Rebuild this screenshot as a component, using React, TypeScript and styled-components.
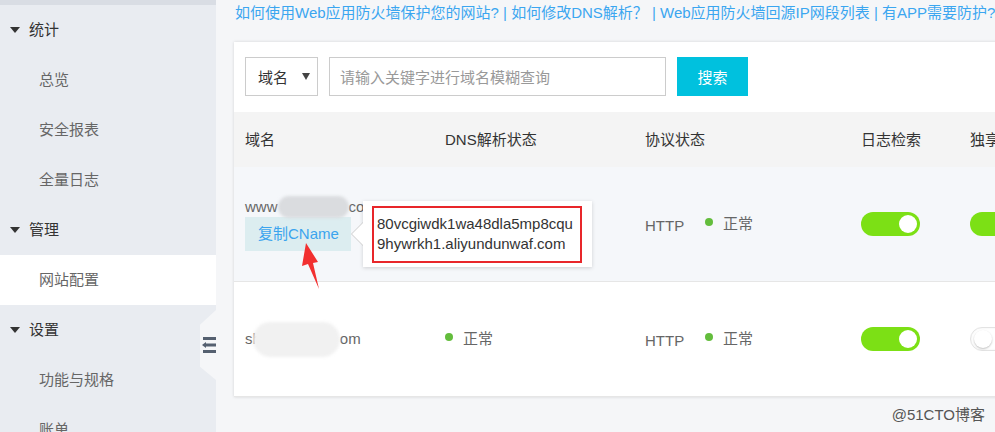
import React from 'react';
import styled, { createGlobalStyle } from 'styled-components';

const GlobalStyle = createGlobalStyle`
  html, body {
    margin: 0;
    padding: 0;
    background: #f5f6f8;
  }
  body {
    font-family: "Liberation Sans", "Noto Sans CJK SC", Arial, sans-serif;
    font-size: 15px;
    color: #333;
  }
`;

const Page = styled.div`
  display: flex;
  width: 995px;
  height: 432px;
  overflow: hidden;
  position: relative;
`;

/* ---------- sidebar ---------- */

const Sidebar = styled.nav`
  width: 216px;
  flex-shrink: 0;
  background: #e9ecf1;
  border-top: 5px solid #d9dde4;
  position: relative;
`;

const NavItem = styled.div<{ $group?: boolean; $active?: boolean }>`
  height: 50px;
  display: flex;
  align-items: center;
  gap: 9px;
  padding-left: ${(p) => (p.$group ? '10px' : '39px')};
  font-size: 15px;
  line-height: 20px;
  color: ${(p) => (p.$group ? '#333' : '#666')};
  background: ${(p) => (p.$active ? '#fff' : 'transparent')};
`;

const Caret = styled.span`
  width: 0;
  height: 0;
  border-left: 5px solid transparent;
  border-right: 5px solid transparent;
  border-top: 6px solid #333;
`;

const CollapseTab = styled.div`
  position: absolute;
  right: 0;
  top: 305px;
  width: 16px;
  height: 70px;
  background: #f5f6f8;
  clip-path: polygon(100% 0, 0 21%, 0 81%, 100% 100%);
  display: flex;
  align-items: center;
  justify-content: flex-end;
`;

/* ---------- main ---------- */

const Main = styled.main`
  flex: 1;
  overflow: hidden;
  padding: 3px 0 0 18px;
`;

const HelpLinks = styled.div`
  font-size: 15px;
  line-height: 20px;
  color: #3ba6f0;
  white-space: nowrap;
  margin-left: 1px;
`;

const Card = styled.section`
  margin-top: 19px;
  width: 900px;
  background: #fff;
  box-shadow: 0 0 3px rgba(0, 0, 0, 0.14);
`;

const SearchBar = styled.div`
  display: flex;
  gap: 11px;
  padding: 15px 0 16px 11px;
`;

const SelectBox = styled.div`
  width: 73px;
  height: 39px;
  box-sizing: border-box;
  border: 1px solid #ccc;
  display: flex;
  align-items: center;
  justify-content: space-between;
  padding: 0 7px 0 12px;
  color: #333;
  font-size: 15px;
  &::after {
    content: '';
    border-left: 4px solid transparent;
    border-right: 4px solid transparent;
    border-top: 7px solid #444;
  }
`;

const SearchInput = styled.div`
  width: 337px;
  height: 39px;
  box-sizing: border-box;
  border: 1px solid #ccc;
  display: flex;
  align-items: center;
  padding-left: 10px;
  color: #999;
  font-size: 15px;
`;

const SearchButton = styled.button`
  width: 71px;
  height: 39px;
  border: none;
  background: #00c1de;
  color: #fff;
  font-family: inherit;
  font-size: 15px;
`;

const Row = styled.div<{ $head?: boolean; $bg?: string }>`
  display: grid;
  grid-template-columns: 200px 200px 216px 109px 1fr;
  align-items: center;
  padding-left: 11px;
  height: ${(p) => (p.$head ? '55px' : '114px')};
  background: ${(p) => p.$bg || '#fff'};
  border-bottom: ${(p) => (p.$head ? 'none' : '1px solid #e6e6e6')};
  color: ${(p) => (p.$head ? '#333' : '#666')};
  font-size: 15px;
  line-height: 20px;
`;

const Cell = styled.div`
  display: flex;
  align-items: center;
  white-space: nowrap;
  position: relative;
`;

const NameBlock = styled.div`
  position: relative;
  display: flex;
  flex-direction: column;
  align-items: flex-start;
`;

const NameLine = styled.div`
  display: flex;
  align-items: center;
  height: 20px;
  color: #666;
`;

const Redact = styled.span<{ $w: number; $h: number; $c: string; $shift?: number }>`
  display: inline-block;
  width: ${(p) => p.$w}px;
  height: ${(p) => p.$h}px;
  margin-left: ${(p) => p.$shift || 0}px;
  background: ${(p) => p.$c};
  border-radius: ${(p) => p.$h / 2}px;
  filter: blur(1.5px);
`;

const CopyButton = styled.div`
  height: 34px;
  width: 106px;
  box-sizing: border-box;
  display: flex;
  align-items: center;
  padding-left: 13px;
  background: #dcedf0;
  color: #3ba4ee;
  font-size: 15px;
`;

const Popover = styled.div`
  position: absolute;
  left: 118px;
  top: 4px;
  width: 229px;
  height: 66px;
  box-sizing: border-box;
  padding: 5px 10px 4px 9px;
  background: #fff;
  box-shadow: 0 1px 4px rgba(0, 0, 0, 0.16);
  &::before,
  &::after {
    content: '';
    position: absolute;
    top: 21px;
    border-top: 12px solid transparent;
    border-bottom: 12px solid transparent;
  }
  &::before {
    left: -12px;
    border-right: 12px solid #ccc;
  }
  &::after {
    left: -11px;
    border-right: 12px solid #fff;
  }
`;

const CnameBox = styled.div`
  height: 100%;
  box-sizing: border-box;
  border: 2px solid #e8262a;
  padding: 6px 0 0 3px;
  color: #333;
  font-size: 15px;
  line-height: 20px;
`;

const Annotation = styled.svg`
  position: absolute;
  left: 45px;
  top: 44px;
`;

const Dot = styled.span`
  width: 8px;
  height: 8px;
  border-radius: 50%;
  background: #63bd3c;
  margin: 0 10px 4px 0;
`;

const Protocol = styled.span`
  width: 60px;
  padding-top: 4px;
`;

const Switch = styled.span<{ $on?: boolean }>`
  width: 59px;
  height: 24px;
  box-sizing: border-box;
  border-radius: 12px;
  display: flex;
  align-items: center;
  justify-content: ${(p) => (p.$on ? 'flex-end' : 'flex-start')};
  padding: 0 3px;
  background: ${(p) => (p.$on ? '#7ce015' : '#fff')};
  border: ${(p) => (p.$on ? 'none' : '1px solid #e3e3e3')};
  box-shadow: ${(p) => (p.$on ? 'none' : 'inset 0 0 2px rgba(0,0,0,0.08)')};
  &::after {
    content: '';
    width: 18px;
    height: 18px;
    border-radius: 50%;
    background: #fff;
    box-shadow: ${(p) => (p.$on ? 'none' : '0 1px 2px rgba(0,0,0,0.25)')};
  }
`;

const Watermark = styled.div`
  position: absolute;
  right: 10px;
  bottom: 8px;
  font-size: 15px;
  color: #555;
`;

const CollapseIcon = () => (
  <svg width="14" height="20" viewBox="0 0 14 20">
    <rect x="1" y="2" width="13" height="3" fill="#556070" />
    <rect x="4" y="8.5" width="10" height="3" fill="#556070" />
    <path d="M0 10 L4 7 L4 13 Z" fill="#556070" />
    <rect x="1" y="15" width="13" height="3" fill="#556070" />
  </svg>
);

const Status = ({ label }: { label: string }) => (
  <Cell>
    <Dot />
    {label}
  </Cell>
);

export default function App() {
  return (
    <>
      <GlobalStyle />
      <Page>
        <Sidebar>
          <NavItem $group>
            <Caret />
            统计
          </NavItem>
          <NavItem>总览</NavItem>
          <NavItem>安全报表</NavItem>
          <NavItem>全量日志</NavItem>
          <NavItem $group>
            <Caret />
            管理
          </NavItem>
          <NavItem $active>网站配置</NavItem>
          <NavItem $group>
            <Caret />
            设置
          </NavItem>
          <NavItem>功能与规格</NavItem>
          <NavItem>账单</NavItem>
          <CollapseTab>
            <CollapseIcon />
          </CollapseTab>
        </Sidebar>

        <Main>
          <HelpLinks>
            如何使用Web应用防火墙保护您的网站? | 如何修改DNS解析？ | Web应用防火墙回源IP网段列表 | 有APP需要防护?
          </HelpLinks>

          <Card>
            <SearchBar>
              <SelectBox>域名</SelectBox>
              <SearchInput>请输入关键字进行域名模糊查询</SearchInput>
              <SearchButton>搜索</SearchButton>
            </SearchBar>

            <Row $head $bg="#f4f4f4">
              <Cell>域名</Cell>
              <Cell>DNS解析状态</Cell>
              <Cell>协议状态</Cell>
              <Cell>日志检索</Cell>
              <Cell>独享IP</Cell>
            </Row>

            <Row $bg="#f5f7fa">
              <Cell>
                <NameBlock>
                  <NameLine>
                    www
                    <Redact $w={71} $h={22} $c="#dadcdf" />
                    com
                  </NameLine>
                  <CopyButton>复制CName</CopyButton>
                  <Popover>
                    <CnameBox>
                      80vcgiwdk1wa48dla5mp8cqu
                      <br />
                      9hywrkh1.aliyundunwaf.com
                    </CnameBox>
                  </Popover>
                  <Annotation width="36" height="52" viewBox="0 0 36 52">
                    <polygon
                      points="16,2 28,21 23,22 29,48 18,23 12,25"
                      fill="#f23030"
                    />
                  </Annotation>
                </NameBlock>
              </Cell>
              <Cell />
              <Cell>
                <Protocol>HTTP</Protocol>
                <Dot />
                正常
              </Cell>
              <Cell>
                <Switch $on />
              </Cell>
              <Cell>
                <Switch $on />
              </Cell>
            </Row>

            <Row>
              <Cell>
                <NameLine>
                  sh
                  <Redact $w={87} $h={35} $c="#f1f1f1" $shift={-8} />
                  om
                </NameLine>
              </Cell>
              <Status label="正常" />
              <Cell>
                <Protocol>HTTP</Protocol>
                <Dot />
                正常
              </Cell>
              <Cell>
                <Switch $on />
              </Cell>
              <Cell>
                <Switch />
              </Cell>
            </Row>
          </Card>
        </Main>

        <Watermark>@51CTO博客</Watermark>
      </Page>
    </>
  );
}
